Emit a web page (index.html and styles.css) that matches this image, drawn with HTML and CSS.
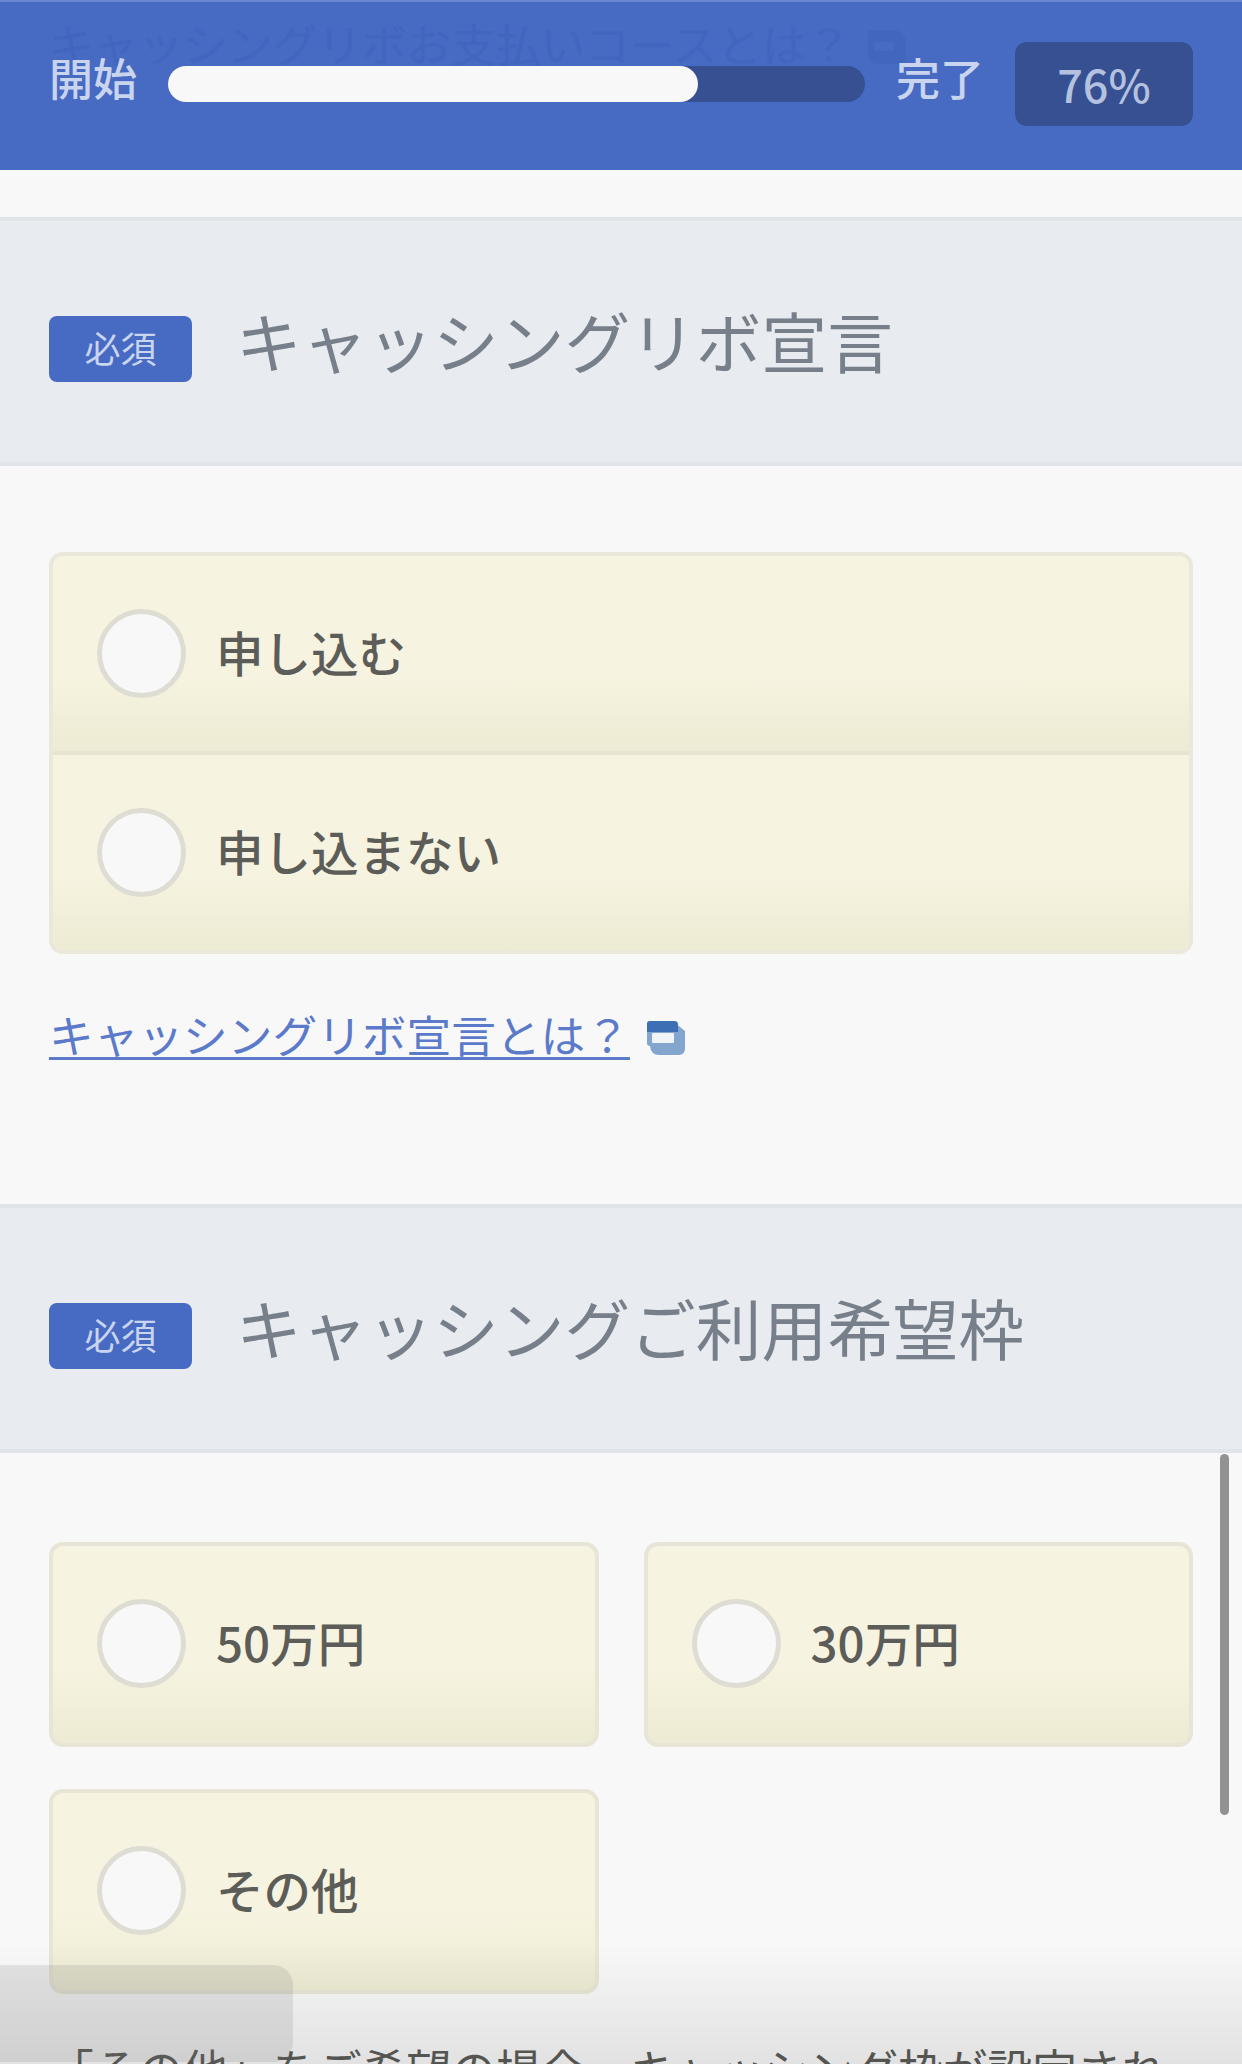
FILE: index.html
```html
<!DOCTYPE html>
<html lang="ja">

<head>
    <meta charset="UTF-8" />
    <title>お申し込み</title>
    <link rel="stylesheet" href="styles.css">
</head>

<body>
    <header class="progress-header">
        <div class="under-text">
            キャッシングリボお支払いコースとは？
            <svg class="window-icon" viewBox="0 0 38 34">
                <path d="M4 0h25l9 9v19a6 6 0 0 1-6 6H10a10 10 0 0 1-10-10V4a4 4 0 0 1 4-4zM6 12v9h20v-9z" fill="#4265bd" fill-rule="evenodd" />
            </svg>
        </div>
        <span class="progress-label">開始</span>
        <div class="progress-bar">
            <div class="progress-fill" style="width: 76%"></div>
        </div>
        <span class="progress-label">完了</span>
        <span class="progress-percent">76%</span>
    </header>

    <main>
        <section>
            <div class="section-title">
                <span class="required">必須</span>
                <h2>キャッシングリボ宣言</h2>
            </div>
            <div class="section-body">
                <div class="radio-list">
                    <label class="radio-item"><span class="radio"></span><span class="radio-text">申し込む</span></label>
                    <label class="radio-item"><span class="radio"></span><span class="radio-text">申し込まない</span></label>
                </div>
                <p class="help">
                    <a class="help-link" href="#">キャッシングリボ宣言とは？</a>
                    <svg class="window-icon" viewBox="0 0 38 34">
                        <path d="M28 2l10 8v18a6 6 0 0 1-6 6H12q-8 0-9-9z" fill="#83a6cf" />
                        <path d="M3 0h24q4 0 4 4v21H3q-3 0-3-3V3q0-3 3-3z" fill="#83a6cf" />
                        <path d="M3 0h24q4 0 4 4v7H0V3q0-3 3-3z" fill="#3c6fb3" />
                        <rect x="5" y="12" width="22" height="10" rx="1" fill="#f0f3f8" />
                    </svg>
                </p>
            </div>
        </section>

        <section>
            <div class="section-title">
                <span class="required">必須</span>
                <h2>キャッシングご利用希望枠</h2>
            </div>
            <div class="section-body">
                <div class="radio-grid">
                    <label class="radio-card"><span class="radio"></span><span class="radio-text">50万円</span></label>
                    <label class="radio-card"><span class="radio"></span><span class="radio-text">30万円</span></label>
                    <label class="radio-card"><span class="radio"></span><span class="radio-text">その他</span></label>
                </div>
                <p class="note">「その他」をご希望の場合、キャッシング枠が設定され</p>
            </div>
        </section>
    </main>

    <div class="scroll-thumb"></div>
    <div class="bottom-shade"></div>
    <div class="status-panel"></div>
</body>

</html>
```

FILE: styles.css
```css
* {
    box-sizing: border-box;
}

body {
    font-family: "Noto Sans CJK JP", sans-serif;
    font-size: 44.7px;
    color: #5c5c58;
    background-color: #f8f8f8;
    margin: 0;
    height: 2064px;
    position: relative;
    overflow: hidden;
}

h2,
p {
    margin: 0;
}

/* progress header */
.progress-header {
    position: relative;
    display: flex;
    align-items: center;
    height: 170px;
    padding: 0 49px 4px;
    background-color: #476ac3;
    border-top: 2px solid #6a87d1;
    color: #c9d4ee;
}

/* page text showing through the translucent header */
.under-text {
    position: absolute;
    left: 49px;
    top: 8px;
    display: flex;
    align-items: center;
    gap: 17px;
    line-height: 66px;
    color: #4265bd;
}

.progress-label {
    position: relative;
    font-size: 44px;
    font-weight: 500;
    line-height: 64px;
    margin-bottom: 14px;
}

.progress-bar {
    position: relative;
    flex: 1;
    height: 36px;
    margin: 0 31px;
    border-radius: 18px;
    background-color: #365092;
}

.progress-fill {
    height: 100%;
    border-radius: 18px;
    background-color: #f8f8f8;
}

.progress-percent {
    width: 178px;
    height: 84px;
    margin-left: 31px;
    border-radius: 12px;
    background-color: #365092;
    font-size: 45px;
    font-weight: 500;
    line-height: 84px;
    text-align: center;
    color: #b4c1df;
}

/* sections */
main {
    padding-top: 47px;
}

.section-title {
    display: flex;
    align-items: center;
    gap: 44px;
    height: 249px;
    padding: 0 49px;
    background-color: #e8ebf0;
    border-top: 4px solid #e0e4e8;
    border-bottom: 4px solid #e0e4e8;
}

.section-title h2 {
    margin-bottom: 3px;
    font-size: 65.7px;
    font-weight: 400;
    line-height: 80px;
    color: #77808a;
}

.required {
    width: 143px;
    height: 66px;
    margin-top: 15px;
    border-radius: 8px;
    background-color: #476ac3;
    font-size: 36px;
    line-height: 62px;
    text-align: center;
    color: #c9d4ee;
}

.section-body {
    padding: 86px 49px 0;
}

/* radio buttons */
.radio-list {
    border: 4px solid #e9e8da;
    border-radius: 14px;
    overflow: hidden;
}

.radio-item,
.radio-card {
    display: flex;
    align-items: center;
    gap: 30px;
    font-size: 47.5px;
    font-weight: 500;
    background: linear-gradient(#f6f3e0 60%, #edebd3);
}

.radio-item {
    height: 195px;
    padding-left: 44px;
}

.radio-item + .radio-item {
    height: 199px;
    border-top: 4px solid #e7e5d1;
}

.radio {
    width: 89px;
    height: 89px;
    border: 5px solid #deddd3;
    border-radius: 50%;
    background-color: #f8f8f8;
}

.radio-text {
    margin-bottom: 5px;
}

.radio-grid {
    display: grid;
    grid-template-columns: 1fr 1fr;
    gap: 42px 45px;
    padding-top: 3px;
}

.radio-card {
    height: 205px;
    padding: 0 0 2px 44px;
    border: 4px solid #e7e6d6;
    border-radius: 14px;
}

.help {
    display: flex;
    align-items: center;
    gap: 17px;
    height: 66px;
    margin: 47px 0 137px;
}

.help-link {
    color: #5c7aca;
    line-height: 66px;
    text-decoration: underline;
    text-decoration-thickness: 3px;
    text-underline-offset: 4px;
}

.window-icon {
    width: 38px;
    height: 34px;
    margin-top: 8px;
}

.note {
    margin-top: 41px;
    line-height: 66px;
    white-space: nowrap;
}

/* overlays */
.scroll-thumb {
    position: absolute;
    left: 1220px;
    top: 1454px;
    width: 9px;
    height: 361px;
    border-radius: 5px;
    background-color: #929292;
}

.bottom-shade {
    position: absolute;
    left: 0;
    bottom: 0;
    width: 100%;
    height: 120px;
    background: linear-gradient(rgba(0, 0, 0, 0), rgba(0, 0, 0, 0.09));
}

.status-panel {
    position: absolute;
    left: 0;
    top: 1965px;
    width: 293px;
    height: 97px;
    border-radius: 0 20px 20px 0;
    background-color: rgba(120, 120, 120, 0.17);
}
```
